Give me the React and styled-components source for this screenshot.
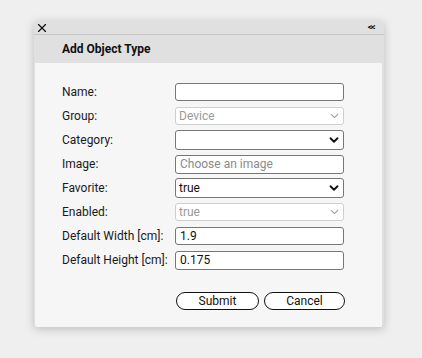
import React from "react";
import styled, { createGlobalStyle } from "styled-components";
import { X, ChevronDown } from "lucide-react";

const GlobalStyle = createGlobalStyle`
  html, body {
    margin: 0;
    padding: 0;
    background: #efefef;
    font-family: Roboto, "Liberation Sans", Arial, sans-serif;
  }
`;

const Page = styled.div`
  width: 422px;
  height: 358px;
  padding: 21px 0 0 34px;
  box-sizing: border-box;
`;

const Dialog = styled.div`
  width: 350px;
  height: 306px;
  background: #e0e0e0;
  border-radius: 4px;
  box-shadow: 0 2px 10px rgba(0, 0, 0, 0.22);
  display: flex;
  flex-direction: column;
  overflow: hidden;
`;

const TitleBar = styled.div`
  height: 13px;
  display: flex;
  align-items: center;
  justify-content: space-between;
  padding: 0 10px 0 1px;
  border-bottom: 1px solid #c8c8c8;
  color: #111;
`;

const Collapse = styled.span`
  font-size: 9px;
  font-weight: 700;
  letter-spacing: -1.5px;
  line-height: 1;
`;

const Header = styled.div`
  height: 28px;
  display: flex;
  align-items: center;
  padding-left: 28px;
  font-size: 12px;
  font-weight: 700;
  color: #111;
`;

const Body = styled.div`
  flex: 1;
  background: #f6f6f6;
  margin: 0 2px 0 1px;
  padding: 17px 0 0 27px;
`;

const Form = styled.div`
  display: grid;
  grid-template-columns: 113px 169px;
  grid-auto-rows: 24px;
  align-items: center;
`;

const Label = styled.label`
  font-size: 12px;
  color: #1a1a1a;
`;

const Field = styled.div`
  position: relative;
  display: flex;
`;

const TextInput = styled.input`
  width: 100%;
  height: ${(p) => (p.$tall ? 19 : 18)}px;
  box-sizing: border-box;
  border: 1px solid #767676;
  border-radius: 3px;
  background: #fff;
  padding: 0 4px;
  font-family: inherit;
  font-size: 12px;
  color: #111;
  outline: none;
  &::placeholder {
    color: #8a8a8a;
  }
`;

const Select = styled.select`
  appearance: none;
  width: 100%;
  height: ${(p) => (p.disabled ? 18 : 20)}px;
  box-sizing: border-box;
  border: 1px solid ${(p) => (p.disabled ? "#cfcfcf" : "#767676")};
  border-radius: 3px;
  background: #fff;
  padding: 0 3px;
  font-family: inherit;
  font-size: 12px;
  color: ${(p) => (p.disabled ? "#9a9a9a" : "#111")};
  outline: none;
  opacity: 1;
`;

const Arrow = styled(ChevronDown)`
  position: absolute;
  right: 3px;
  top: 50%;
  transform: translateY(-50%);
  pointer-events: none;
  color: ${(p) => (p.$muted ? "#a0a0a0" : "#111")};
`;

const Buttons = styled.div`
  display: flex;
  gap: 5px;
  padding: 20px 0 0 114px;
`;

const Button = styled.button`
  width: ${(p) => p.$w}px;
  height: 18px;
  border: 1px solid #111;
  border-radius: 9px;
  background: #fff;
  font-family: inherit;
  font-size: 12px;
  color: #111;
  padding: 0;
`;

const SelectField = ({ value, disabled }) => (
  <Field>
    <Select disabled={disabled} defaultValue={value}>
      <option value={value}>{value}</option>
    </Select>
    <Arrow size={disabled ? 13 : 14} strokeWidth={disabled ? 2 : 3.2} $muted={disabled} />
  </Field>
);

const App = () => {
  return (
    <Page>
      <GlobalStyle />
      <Dialog>
        <TitleBar>
          <X size={14} strokeWidth={2} />
          <Collapse>&lt;&lt;</Collapse>
        </TitleBar>
        <Header>Add Object Type</Header>
        <Body>
          <Form>
            <Label>Name:</Label>
            <Field>
              <TextInput />
            </Field>
            <Label>Group:</Label>
            <SelectField value="Device" disabled />
            <Label>Category:</Label>
            <SelectField value="" />
            <Label>Image:</Label>
            <Field>
              <TextInput $tall placeholder="Choose an image" />
            </Field>
            <Label>Favorite:</Label>
            <SelectField value="true" />
            <Label>Enabled:</Label>
            <SelectField value="true" disabled />
            <Label>Default Width [cm]:</Label>
            <Field>
              <TextInput defaultValue="1.9" />
            </Field>
            <Label>Default Height [cm]:</Label>
            <Field>
              <TextInput $tall defaultValue="0.175" />
            </Field>
          </Form>
          <Buttons>
            <Button $w={83}>Submit</Button>
            <Button $w={81}>Cancel</Button>
          </Buttons>
        </Body>
      </Dialog>
    </Page>
  );
};

export default App;
